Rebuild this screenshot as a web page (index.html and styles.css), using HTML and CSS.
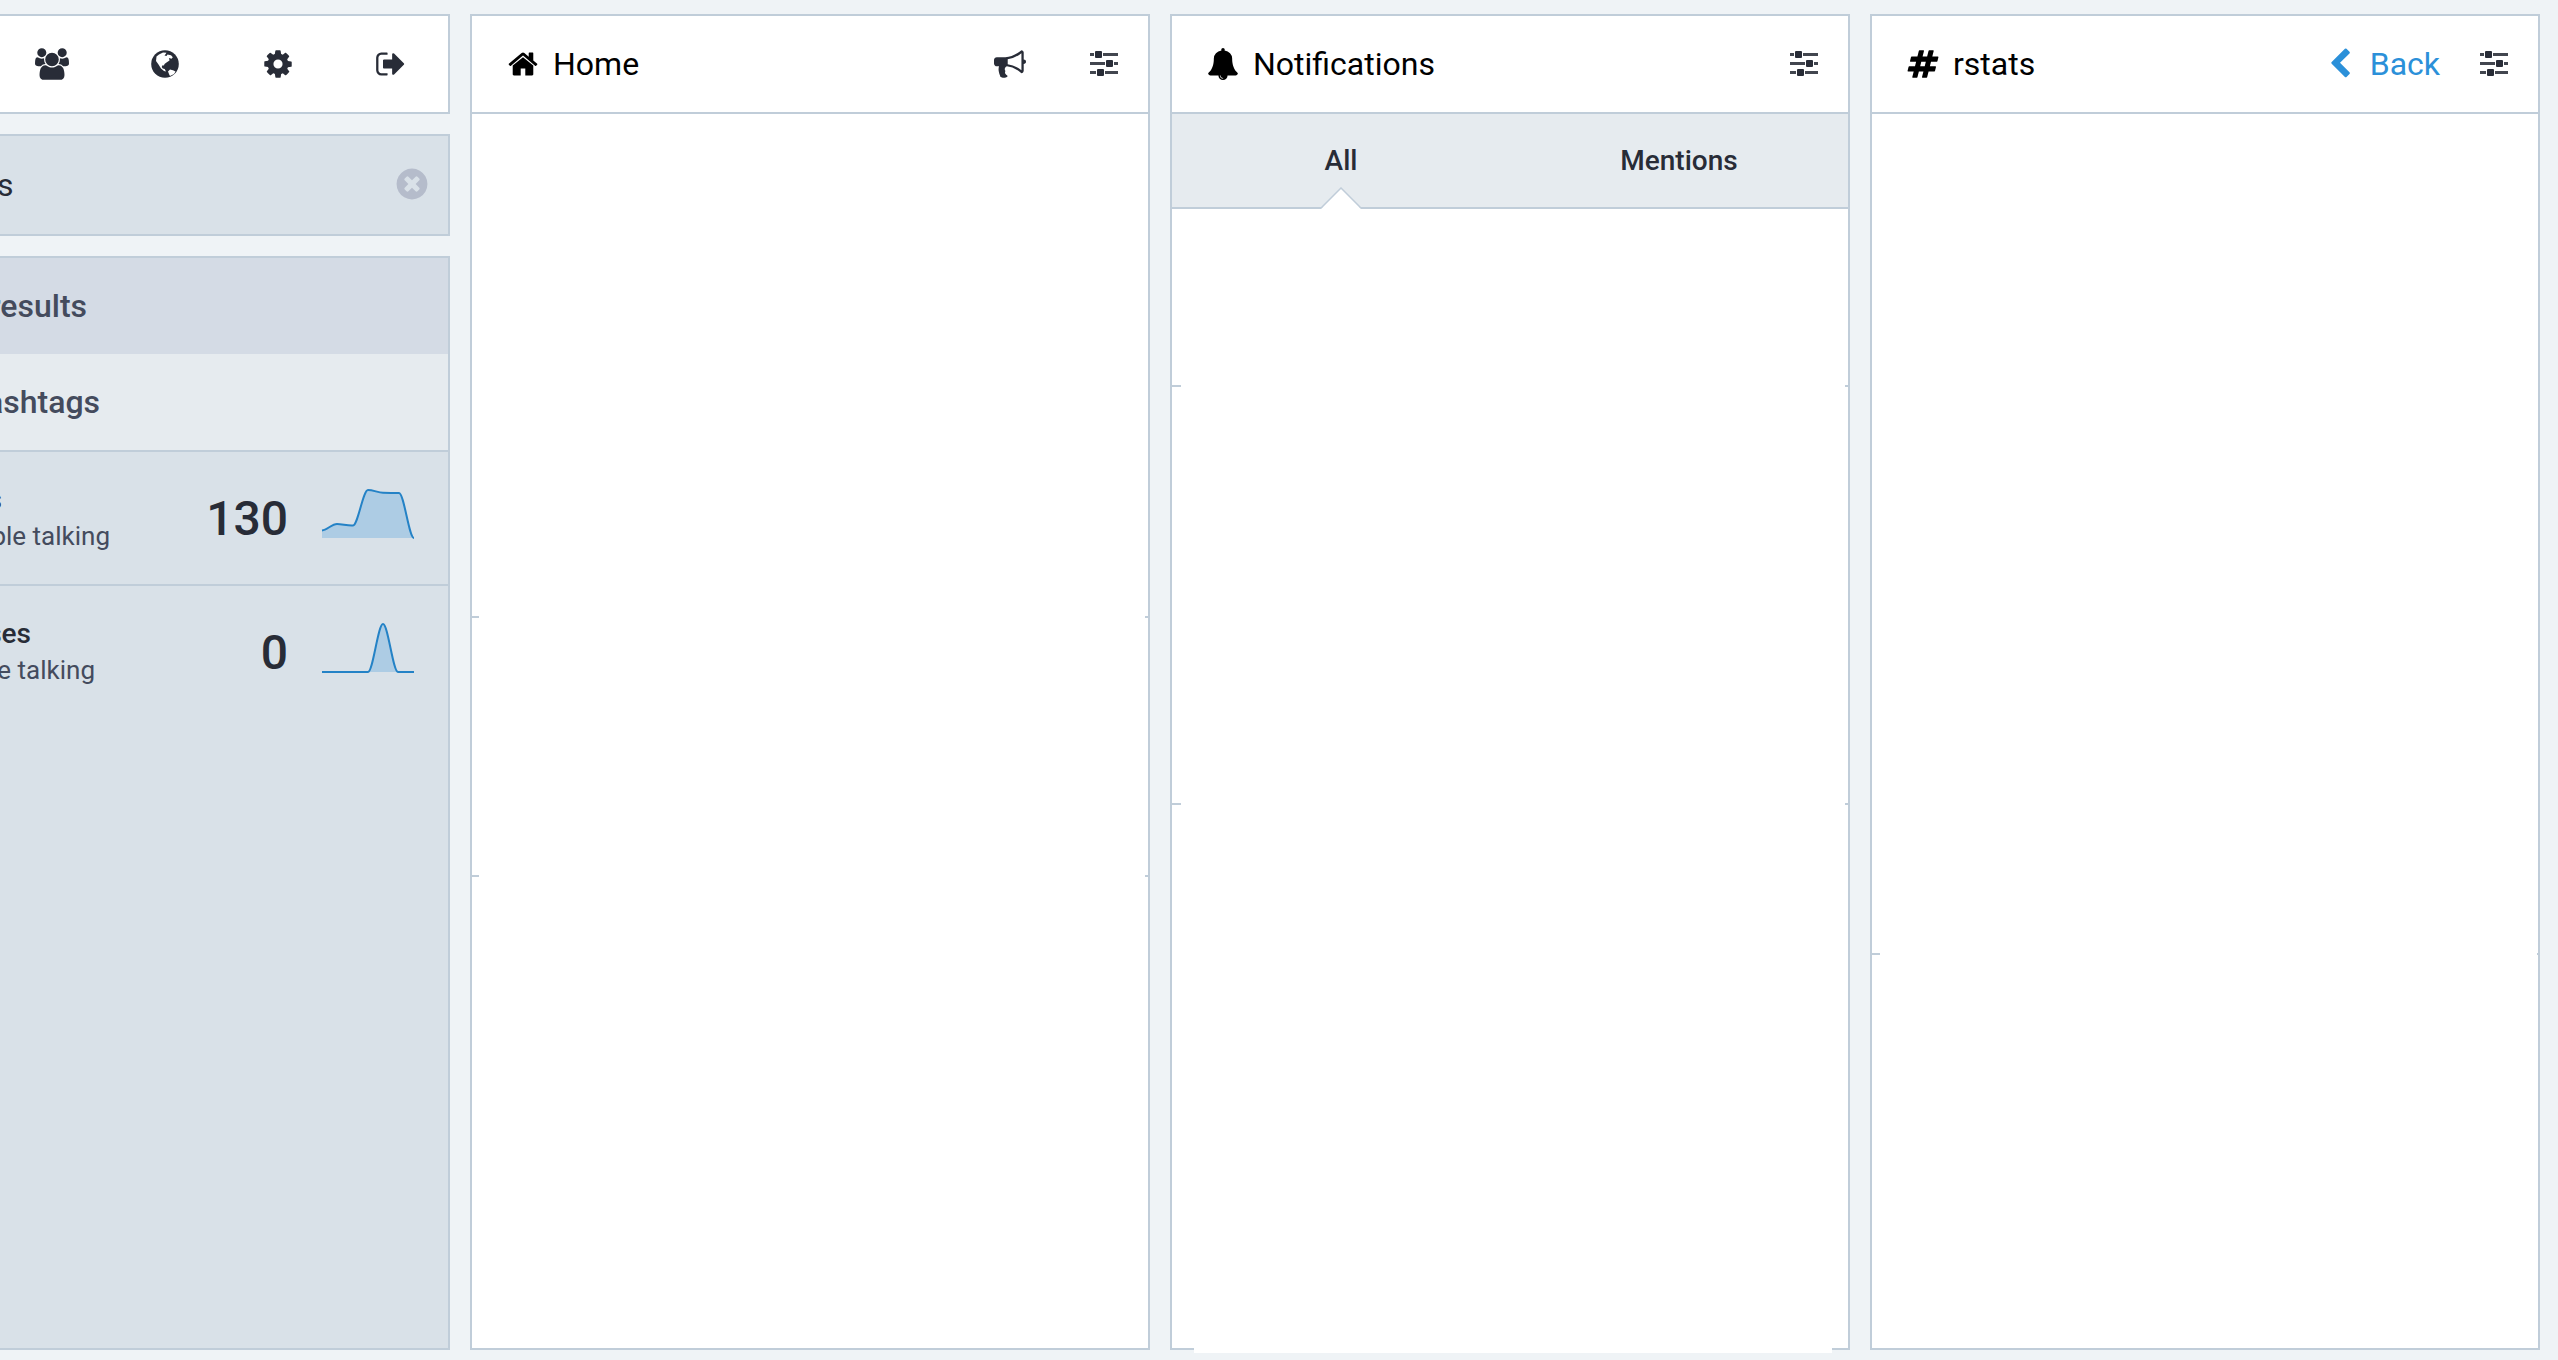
FILE: index.html
```html
<!DOCTYPE html>
<html lang="en">
<head>
<meta charset="utf-8">
<meta name="viewport" content="width=device-width, initial-scale=1">
<title>Home</title>
<link rel="stylesheet" href="styles.css">
</head>
<body>
<svg class="sprite" aria-hidden="true">
  <symbol id="sliders" viewBox="0 0 28 26">
    <path d="M0 2h4v3H0zM13 2h15v3H13zM0 11h15v3H0zM24 11h4v3h-4zM0 20h6v3H0zM15 20h13v3H15z" opacity=".88"/>
    <rect x="5" y="0" width="7" height="7" rx="1"/>
    <rect x="16" y="9" width="7" height="7" rx="1"/>
    <rect x="7" y="18" width="7" height="7" rx="1"/>
  </symbol>
</svg>
<main class="board">
  <section class="drawer">
    <nav class="drawer-nav">
      <a href="#local" aria-label="Local timeline"><svg class="icon icon-wide" viewBox="0 0 1920 1792"><path d="M593 896q-162 5-265 128h-134q-82 0-138-40.500t-56-118.500q0-353 124-353 6 0 43.500 21t97.500 42.500 119 21.500q67 0 133-23-5 37-5 66 0 139 81 256zm1071 637q0 120-73 189.500t-194 69.500h-874q-121 0-194-69.500t-73-189.500q0-53 3.500-103.500t14-109 26.500-108.500 43-97.500 62-81 85.500-53.500 111.500-20q10 0 43 21.500t73 48 107 48 135 21.500 135-21.500 107-48 73-48 43-21.500q61 0 111.500 20t85.500 53.500 62 81 43 97.500 26.500 108.500 14 109 3.500 103.500zm-1024-1277q0 106-75 181t-181 75-181-75-75-181 75-181 181-75 181 75 75 181zm704 384q0 159-112.500 271.500t-271.500 112.500-271.500-112.500-112.500-271.500 112.500-271.500 271.500-112.500 271.500 112.500 112.500 271.500zm576 225q0 78-56 118.500t-138 40.500h-134q-103-123-265-128 81-117 81-256 0-29-5-66 66 23 133 23 59 0 119-21.500t97.500-42.500 43.500-21q124 0 124 353zm-128-609q0 106-75 181t-181 75-181-75-75-181 75-181 181-75 181 75 75 181z"/></svg></a>
      <a href="#federated" aria-label="Federated timeline"><svg class="icon" viewBox="-2 -2 32 32"><circle cx="14" cy="14" r="13.800"/><path fill="#fff" d="M5.500 6.500L8 4.500l4-2 3.500.2-1 1.600-1 1.200 2 .5 1-1.500 3.500.8 1.800 2-1.300 1.500-2.500-.8.5 2.500-3 2-2 1.500-.5 1.500-1.500-.3-.8 1.800 1 1.500 2 .5 1.300 2.500-2-.5-3-2.500-2.500-4-2.500-3.500zM17 21.500l2-2 3 .8 2.500 1.200-1.500 2.500-4 2-.8-1.500z"/></svg></a>
      <a href="#preferences" aria-label="Preferences"><svg class="icon" viewBox="0 0 1792 1792"><path d="M1152 896q0-106-75-181t-181-75-181 75-75 181 75 181 181 75 181-75 75-181zm512-109v222q0 12-8 23t-20 13l-185 28q-19 54-39 91 35 50 107 138 10 12 10 25t-9 23q-27 37-99 108t-94 71q-12 0-26-9l-138-108q-44 23-91 38-16 136-29 186-7 28-36 28h-222q-14 0-24.500-8.500t-11.500-21.500l-28-184q-49-16-90-37l-141 107q-10 9-25 9-14 0-25-11-126-114-165-168-7-10-7-23 0-12 8-23 15-21 51-66.500t54-70.500q-27-50-41-99l-183-27q-13-2-21-12.500t-8-23.500v-222q0-12 8-23t19-13l186-28q14-46 39-92-40-57-107-138-10-12-10-24 0-10 9-23 26-36 98.500-107.500t94.500-71.500q13 0 26 10l138 107q44-23 91-38 16-136 29-186 7-28 36-28h222q14 0 24.500 8.500t11.500 21.500l28 184q49 16 90 37l142-107q9-9 24-9 13 0 25 10 129 119 165 170 7 8 7 22 0 12-8 23-15 21-51 66.500t-54 70.500q26 50 41 98l183 28q13 2 21 12.500t8 23.500z"/></svg></a>
      <a href="#logout" aria-label="Logout"><svg class="icon" viewBox="0 0 1792 1792"><path d="M704 1440q0 4 1 20t.5 26.500-3 23.500-10 19.500-20.500 6.500h-320q-119 0-203.500-84.500t-84.500-203.500v-704q0-119 84.500-203.500t203.500-84.500h320q13 0 22.500 9.500t9.500 22.500q0 4 1 20t.5 26.500-3 23.500-10 19.500-20.500 6.500h-320q-66 0-113 47t-47 113v704q0 66 47 113t113 47h312l11.500 1 11.500 3 8 5.500 7 9 2 13.500zm928-544q0 26-19 45l-544 544q-19 19-45 19t-45-19-19-45v-288h-448q-26 0-45-19t-19-45v-384q0-26 19-45t45-19h448v-288q0-26 19-45t45-19 45 19l544 544q19 19 19 45z"/></svg></a>
    </nav>
    <form class="search">
      <input class="search-input" type="text" value="s" aria-label="Search">
      <button class="search-clear" type="reset" aria-label="Clear"><svg viewBox="0 0 1792 1792"><path d="M1277 1122q0-26-19-45l-181-181 181-181q19-19 19-45 0-27-19-46l-90-90q-19-19-46-19-26 0-45 19l-181 181-181-181q-19-19-45-19-27 0-46 19l-90 90q-19 19-19 46 0 26 19 45l181 181-181 181q-19 19-19 45 0 27 19 46l90 90q19 19 46 19 26 0 45-19l181-181 181 181q19 19 45 19 27 0 46-19l90-90q19-19 19-46zm387-226q0 209-103 385.500t-279.500 279.500-385.500 103-385.500-103-279.500-279.500-103-385.500 103-385.500 279.500-279.500 385.500-103 385.500 103 279.500 279.500 103 385.500z"/></svg></button>
    </form>
    <div class="results">
      <h2 class="results-header"><span class="tail tail-results">results</span></h2>
      <h3 class="results-group"><span class="tail tail-group">ashtags</span></h3>
      <div class="trend">
        <div class="trend-label">
          <a class="trend-name tail tail-first" href="#rstats">s</a>
          <span class="tail tail-people">ple talking</span>
        </div>
        <strong class="trend-count">130</strong>
        <svg class="spark" viewBox="0 0 100 60"><path class="spark-area" d="M4 42.500C9 42 14 36 19 36S30 38 35 37.500 45 2 50 2 60 4.500 65 4.700 76 5 81 5 91 50 96 50H4z"/><path class="spark-line" d="M4 42.500C9 42 14 36 19 36S30 38 35 37.500 45 2 50 2 60 4.500 65 4.700 76 5 81 5 91 50 96 50"/></svg>
      </div>
      <div class="trend">
        <div class="trend-label">
          <a class="trend-name tail tail-name" href="#ses">ses</a>
          <span class="tail tail-talking">e talking</span>
        </div>
        <strong class="trend-count">0</strong>
        <svg class="spark" viewBox="0 0 100 60"><path class="spark-area" d="M4 50H50C55 50 60 2 65 2S75 50 80 50H96z"/><path class="spark-line" d="M4 50H50C55 50 60 2 65 2S75 50 80 50H96"/></svg>
      </div>
    </div>
  </section>

  <section class="column">
    <header class="column-header">
      <h1 class="column-title"><svg class="icon" viewBox="0 0 1792 1792"><path d="M1472 992v480q0 26-19 45t-45 19h-384v-384h-256v384h-384q-26 0-45-19t-19-45v-480q0-1 .5-3t.5-3l575-474 575 474q1 2 1 6zm223-69l-62 74q-8 9-21 11h-3q-13 0-21-7l-692-577-692 577q-12 8-24 7-13-2-21-11l-62-74q-8-10-7-23.500t11-21.500l719-599q32-26 76-26t76 26l244 204v-195q0-14 9-23t23-9h192q14 0 23 9t9 23v408l219 182q10 8 11 21.500t-7 23.500z"/></svg>Home</h1>
      <button class="header-button announce" type="button" aria-label="Announcements"><svg class="icon" viewBox="0 0 1792 1792"><path d="M1664 640q53 0 90.500 37.500t37.500 90.500-37.500 90.500-90.500 37.500v384q0 52-38 90t-90 38q-417-347-812-380-58 19-91 66t-31 100.500 40 92.500q-20 33-23 65.500t6 58 33.500 55 48 50 61.500 50.500q-29 58-111.500 83t-168.500 11.500-132-55.500q-7-23-29.500-87.500t-32-94.500-23-89-15-101 3.500-98.500 22-110.500h-122q-66 0-113-47t-47-113v-192q0-66 47-113t113-47h480q435 0 896-384 52 0 90 38t38 90v384zm-128 604v-954q-394 302-768 343v270q377 42 768 341z"/></svg></button>
      <button class="header-button" type="button" aria-label="Show settings"><svg class="sliders"><use href="#sliders"/></svg></button>
    </header>
    <div class="feed feed-home">
      <article class="post post-a"></article>
      <article class="post post-b"></article>
    </div>
  </section>

  <section class="column column-notifications">
    <header class="column-header">
      <h1 class="column-title"><svg class="icon" viewBox="0 0 1792 1792"><path d="M912 1696q0-16-16-16-59 0-101.500-42.500t-42.500-101.500q0-16-16-16t-16 16q0 73 51.500 124.500t124.500 51.500q16 0 16-16zm816-288q0 52-38 90t-90 38h-448q0 106-75 181t-181 75-181-75-75-181h-448q-52 0-90-38t-38-90q50-42 91-88t85-119.500 74.500-158.500 50-206 19.500-260q0-152 117-282.500t307-158.500q-8-19-8-39 0-40 28-68t68-28 68 28 28 68q0 20-8 39 190 28 307 158.500t117 282.500q0 139 19.500 260t50 206 74.500 158.500 85 119.500 91 88z"/></svg>Notifications</h1>
      <button class="header-button" type="button" aria-label="Show settings"><svg class="sliders"><use href="#sliders"/></svg></button>
    </header>
    <div class="tabs">
      <button class="tab tab-active" type="button">All<svg class="tab-arrow" viewBox="0 0 40 22"><path fill="#fff" d="M0 22L20 1l20 21z"/><path fill="none" stroke="#c0cdd9" stroke-width="1.500" d="M0 21L20 1l20 20"/></svg></button>
      <button class="tab" type="button">Mentions</button>
    </div>
    <div class="feed feed-notifications">
      <article class="post post-c"></article>
      <article class="post post-d"></article>
    </div>
  </section>

  <section class="column column-tag">
    <header class="column-header">
      <h1 class="column-title"><svg class="icon" viewBox="0 0 1792 1792"><path d="M991 1024l64-256h-254l-64 256h254zm768-504l-56 224q-7 24-31 24h-327l-64 256h311q15 0 25 12 10 14 6 28l-56 224q-5 24-31 24h-327l-81 328q-7 24-31 24h-224q-16 0-26-12-9-12-6-28l78-312h-254l-81 328q-7 24-31 24h-225q-15 0-25-12-9-12-6-28l78-312h-311q-15 0-25-12-9-12-6-28l56-224q7-24 31-24h327l64-256h-311q-15 0-25-12-10-14-6-28l56-224q5-24 31-24h327l81-328q7-24 32-24h224q15 0 25 12 9 12 6 28l-78 312h254l81-328q7-24 32-24h224q15 0 25 12 9 12 6 28l-78 312h311q15 0 25 12 9 12 6 28z"/></svg>rstats</h1>
      <button class="header-button back" type="button"><svg class="icon" viewBox="0 0 1792 1792"><path d="M1427 301l-531 531 531 531q19 19 19 45t-19 45l-166 166q-19 19-45 19t-45-19l-742-742q-19-19-19-45t19-45l742-742q19-19 45-19t45 19l166 166q19 19 19 45t-19 45z"/></svg>Back</button>
      <button class="header-button" type="button" aria-label="Show settings"><svg class="sliders"><use href="#sliders"/></svg></button>
    </header>
    <div class="feed feed-tag">
      <article class="post post-e"></article>
    </div>
  </section>
</main>
</body>
</html>
```
FILE: styles.css
```css
:root {
  --line: #c0cdd9;
  --ink: #282c37;
  --muted: #444b5d;
  --panel: #d9e1e8;
  --soft: #e6ebef;
}

* {
  box-sizing: border-box;
}

body {
  margin: 0;
  background: #eff3f6;
  color: var(--ink);
  font-family: Roboto, "Liberation Sans", sans-serif;
  font-size: 32px;
  overflow: hidden;
}

h1, h2, h3 {
  margin: 0;
  font-size: 32px;
}

button {
  padding: 0;
  border: 0;
  background: none;
  color: inherit;
  font: inherit;
}

a {
  color: inherit;
  text-decoration: none;
}

svg {
  display: block;
  flex: none;
  fill: currentColor;
}

.sprite {
  position: absolute;
  width: 0;
  height: 0;
}

.icon {
  width: 32px;
  height: 32px;
}

.icon-wide {
  width: 34px;
}

.board {
  display: flex;
  gap: 20px;
  min-height: 100vh;
  padding: 14px 18px 10px 0;
}

/* Drawer */

.drawer {
  display: flex;
  flex: none;
  flex-direction: column;
  gap: 20px;
  width: 450px;
}

.drawer-nav {
  display: flex;
  justify-content: flex-end;
  height: 100px;
  padding-right: 1px;
  border: 2px solid var(--line);
  border-left: 0;
  background: #fff;
}

.drawer-nav a {
  display: flex;
  flex: none;
  align-items: center;
  justify-content: center;
  width: 113px;
}

.search {
  display: flex;
  align-items: center;
  height: 102px;
  padding-right: 18px;
  border: 2px solid var(--line);
  border-left: 0;
  background: var(--panel);
}

.search-input {
  flex: 1;
  min-width: 0;
  height: 98px;
  padding: 0;
  border: 0;
  outline: 0;
  background: none;
  color: var(--ink);
  font: inherit;
  text-indent: -3px;
}

.search-clear {
  padding-bottom: 2px;
  color: #b5bccb;
}

.search-clear svg {
  width: 36px;
  height: 36px;
}

.results {
  flex: 1;
  border: 2px solid var(--line);
  border-left: 0;
  background: var(--panel);
}

.results-header,
.results-group {
  display: flex;
  align-items: center;
  height: 96px;
  color: var(--muted);
  font-weight: 500;
}

.results-header {
  background: #d4dbe5;
}

.results-group {
  height: 98px;
  border-bottom: 2px solid var(--line);
  background: var(--soft);
}

/* Labels that run in from beyond the left edge of the window */
.tail {
  display: flex;
  justify-content: flex-end;
  white-space: nowrap;
}

.tail-results { width: 87px; }
.tail-group { width: 100px; }
.tail-first { width: 2px; }
.tail-people { width: 110px; }
.tail-name { width: 31px; }
.tail-talking { width: 95px; }

.trend {
  display: flex;
  align-items: center;
  height: 132px;
  padding-right: 30px;
}

.trend + .trend {
  height: 134px;
  border-top: 2px solid var(--line);
}

.trend-label {
  flex: 1;
  color: var(--muted);
  font-size: 26px;
  line-height: 36px;
}

.trend-name {
  color: var(--ink);
  font-size: 28px;
  font-weight: 500;
}

.trend-count {
  font-size: 48px;
  font-weight: 500;
}

.spark {
  width: 100px;
  height: 60px;
  margin-left: 30px;
}

.spark-area {
  fill: #2b90d9;
  fill-opacity: .25;
}

.spark-line {
  fill: none;
  stroke: #2482c6;
  stroke-width: 2;
}

/* Columns */

.column {
  position: relative;
  flex: 68 1 0;
  min-width: 0;
  border: 2px solid var(--line);
  background: #fff;
}

.column-tag {
  flex-grow: 67;
}

.column-header {
  display: flex;
  align-items: center;
  height: 98px;
  padding: 0 30px;
  border-bottom: 2px solid var(--line);
}

.column-title {
  display: flex;
  flex: 1;
  align-items: center;
  gap: 14px;
  padding-left: 5px;
  color: #000;
  font-weight: 400;
}

.header-button {
  display: flex;
  align-items: center;
}

.announce {
  margin-right: 64px;
}

.back {
  gap: 14px;
  margin-right: 40px;
  color: #2b90d9;
}

.sliders {
  width: 28px;
  height: 26px;
}

.tabs {
  display: flex;
  height: 95px;
  border-bottom: 2px solid var(--line);
  background: var(--soft);
}

.tab {
  position: relative;
  flex: 1;
  font-size: 28px;
  font-weight: 500;
}

.tab-arrow {
  position: absolute;
  bottom: -2px;
  left: calc(50% - 20px);
  width: 40px;
  height: 22px;
}

/* Each post ends in a rule that shows only at the column's sides */
.post {
  display: flex;
  align-items: flex-end;
}

.post::after {
  flex: 1;
  height: 2px;
  background: linear-gradient(to right, var(--line) var(--rule-left), transparent var(--rule-left), transparent calc(100% - var(--rule-right)), var(--line) calc(100% - var(--rule-right)));
  content: "";
}

.feed-home { --rule-left: 7px; --rule-right: 3px; }
.feed-notifications { --rule-left: 9px; --rule-right: 3px; }
.feed-tag { --rule-left: 8px; --rule-right: 1px; }

.post-a { height: 504px; }
.post-b { height: 259px; }
.post-c { height: 178px; }
.post-d { height: 418px; }
.post-e { height: 841px; }

.column-notifications::after {
  position: absolute;
  right: 16px;
  bottom: -5px;
  left: 22px;
  height: 8px;
  background: #fff;
  content: "";
}
```
